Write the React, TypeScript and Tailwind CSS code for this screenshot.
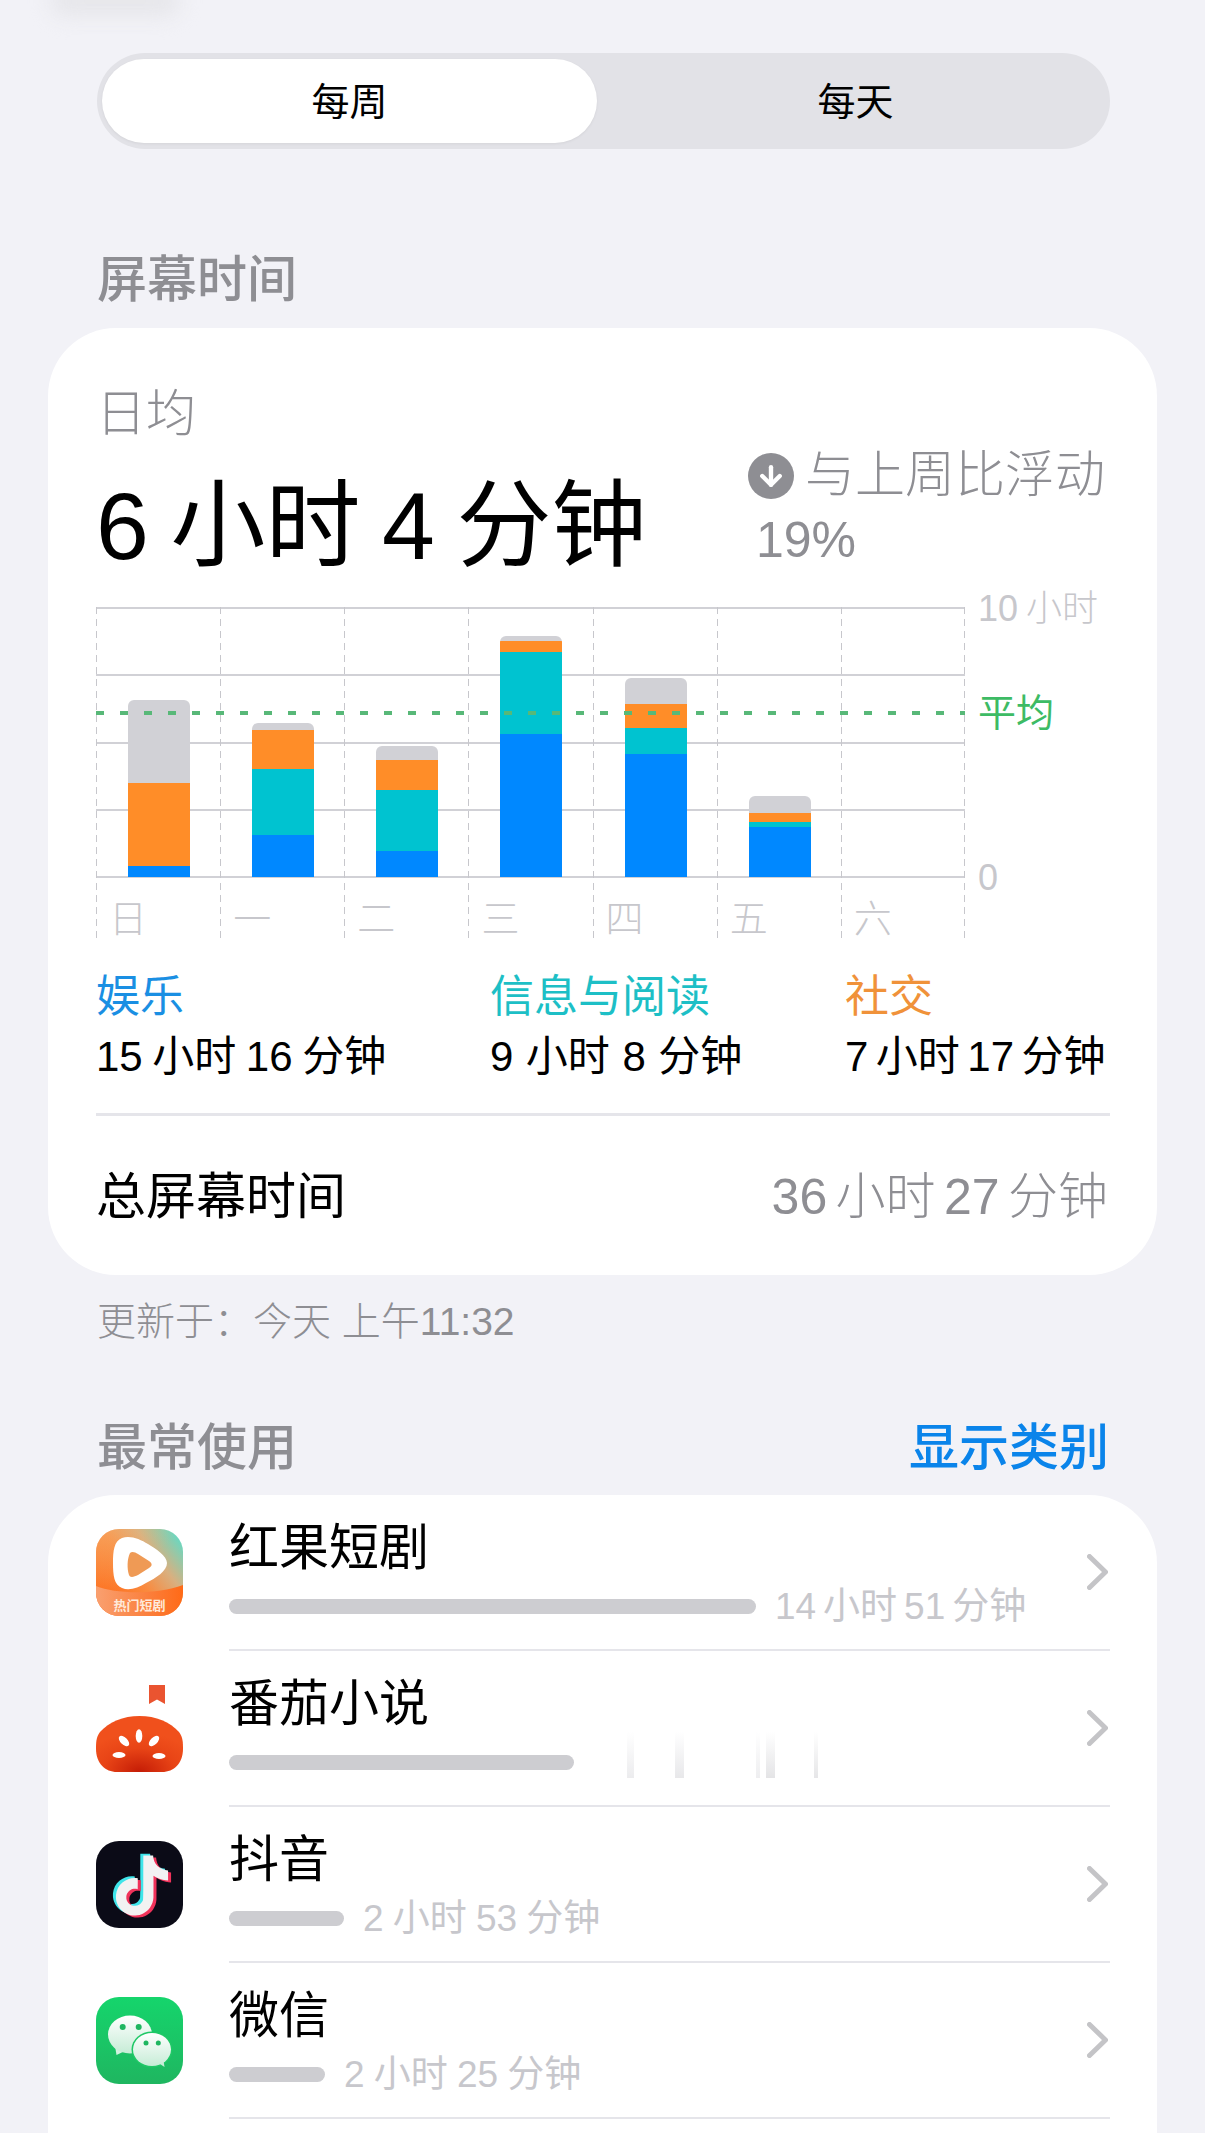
import { ArrowDown } from "lucide-react";

const dayBars = [
  { day: "日", gray: 83, orange: 83, teal: 0, blue: 11 },
  { day: "一", gray: 7, orange: 39, teal: 66, blue: 42 },
  { day: "二", gray: 14, orange: 30, teal: 61, blue: 26 },
  { day: "三", gray: 5, orange: 11, teal: 82, blue: 143 },
  { day: "四", gray: 26, orange: 24, teal: 26, blue: 123 },
  { day: "五", gray: 17, orange: 9, teal: 5, blue: 50 },
  { day: "六", gray: 0, orange: 0, teal: 0, blue: 0 },
];

function DashLine({ className = "" }: { className?: string }) {
  return (
    <div
      className={`absolute top-0 bottom-0 w-px bg-[repeating-linear-gradient(to_bottom,#c7c7cc_0_7px,transparent_7px_12px)] ${className}`}
    />
  );
}

function Chart() {
  return (
    <div className="flex">
      <div className="relative h-[335px] w-[869px]">
        {/* horizontal grid */}
        <div className="absolute inset-x-0 top-0 flex h-[271px] flex-col justify-between">
          {[0, 1, 2, 3, 4].map((i) => (
            <div key={i} className="h-[2px] bg-[#d1d1d6]" />
          ))}
        </div>
        <div className="relative grid h-full grid-cols-7">
          {dayBars.map((b) => (
            <div key={b.day} className="relative flex flex-col">
              <DashLine className="left-0" />
              <div className="flex h-[270px] items-end justify-center pl-[2px]">
                <div className="flex w-[62px] flex-col overflow-hidden rounded-t-[6px]">
                  <div className="bg-[#d1d1d6]" style={{ height: b.gray }} />
                  <div className="bg-[#ff8d28]" style={{ height: b.orange }} />
                  <div className="bg-[#00c3d0]" style={{ height: b.teal }} />
                  <div className="bg-[#0088ff]" style={{ height: b.blue }} />
                </div>
              </div>
              <div className="pt-[24px] pl-[13px] text-[38px] leading-[36px] font-light text-[#c7c7cc]">
                {b.day}
              </div>
            </div>
          ))}
        </div>
        <DashLine className="right-0" />
        {/* average line */}
        <div className="absolute inset-x-0 top-[104px] h-[4px] bg-[repeating-linear-gradient(to_right,#58b878_0_8px,transparent_8px_24px)]" />
      </div>
      <div className="-mt-[16px] ml-[13px] flex flex-col leading-[36px]">
        <div className="text-[36px] font-light text-[#c7c7cc] [word-spacing:-0.06em]">10 小时</div>
        <div className="mt-[68px] text-[38px] text-[#3dbb64]">平均</div>
        <div className="mt-[129px] text-[36px] font-light text-[#c7c7cc]">0</div>
      </div>
    </div>
  );
}

function Category({
  name,
  time,
  color,
  className,
  timeClass,
}: {
  name: string;
  time: string;
  color: string;
  className: string;
  timeClass: string;
}) {
  return (
    <div className={className}>
      <div className={`pt-[1px] text-[44px] leading-[44px] ${color}`}>{name}</div>
      <div className={`mt-[16px] text-[42px] leading-[44px] text-black ${timeClass}`}>{time}</div>
    </div>
  );
}

function HongguoIcon() {
  return (
    <svg viewBox="0 0 87 87" className="size-[87px]">
      <defs>
        <linearGradient id="hg" x1="0" y1="0.85" x2="1" y2="0.1">
          <stop offset="0" stopColor="#ff6410" />
          <stop offset="0.45" stopColor="#fa8a3e" />
          <stop offset="0.7" stopColor="#d8b080" />
          <stop offset="1" stopColor="#5edcc8" />
        </linearGradient>
        <linearGradient id="hg2" x1="0" y1="0" x2="0.5" y2="0.5">
          <stop offset="0" stopColor="#f5b877" stopOpacity="0.5" />
          <stop offset="1" stopColor="#f5b877" stopOpacity="0" />
        </linearGradient>
        <linearGradient id="hg3" x1="0" y1="0" x2="1" y2="0">
          <stop offset="0" stopColor="#f9a070" />
          <stop offset="0.6" stopColor="#fb7f3c" />
          <stop offset="1" stopColor="#ff6a17" />
        </linearGradient>
      </defs>
      <rect width="87" height="87" rx="23" fill="url(#hg)" />
      <rect width="87" height="87" rx="23" fill="url(#hg2)" />
      <path
        d="M26 9C34 6 44 10 52 15C60 20 71 27 71 34C71 42 60 49 50 54C42 59 33 62 26 59C18 56 17 46 17 34C17 22 18 12 26 9Z"
        fill="#fff"
      />
      <path
        d="M34 24C36 22 39 23 42 25L53 32C57 35 56 37 53 39L42 46C38 48 34 49 33 46C31 40 31 30 34 24Z"
        fill="#ef9a55"
      />
      <path d="M0 57C20 65 60 66 87 56V64A23 23 0 0 1 64 87H23A23 23 0 0 1 0 64Z" fill="url(#hg3)" />
      <text x="43.500" y="81" textAnchor="middle" fontSize="13" fontWeight="700" fill="#ffe9d9">
        热门短剧
      </text>
    </svg>
  );
}

function TomatoIcon() {
  return (
    <svg viewBox="0 0 87 87" className="size-[87px]">
      <defs>
        <radialGradient id="tm" cx="0.5" cy="1" r="0.7">
          <stop offset="0" stopColor="#c41c06" />
          <stop offset="0.6" stopColor="#e84416" />
          <stop offset="1" stopColor="#f0501c" />
        </radialGradient>
      </defs>
      <path d="M53 0H69V19L61 14.500L53 19Z" fill="#ea5430" />
      <path
        d="M43.500 31C60 31 74 37 83 47C87 52 87 58 87 64C87 78 78 87 66 87H21C9 87 0 78 0 64C0 58 0 52 4 47C13 37 27 31 43.500 31Z"
        fill="url(#tm)"
      />
      <g fill="#fff">
        <ellipse cx="43" cy="51" rx="3.300" ry="6.700" />
        <ellipse cx="28" cy="56" rx="3.500" ry="6.500" transform="rotate(-45 28 56)" />
        <ellipse cx="58" cy="56" rx="3.500" ry="6.500" transform="rotate(45 58 56)" />
        <ellipse cx="23" cy="70" rx="6.500" ry="3" />
        <ellipse cx="63" cy="71" rx="6.500" ry="3" />
      </g>
    </svg>
  );
}

const notePath =
  "M12.525.02c1.31-.02 2.61-.01 3.91-.02.08 1.53.63 3.09 1.75 4.17 1.12 1.11 2.7 1.62 4.24 1.79v4.03c-1.44-.05-2.89-.35-4.2-.97-.57-.26-1.1-.59-1.62-.93-.01 2.92.01 5.84-.02 8.75-.08 1.4-.54 2.79-1.35 3.94-1.31 1.92-3.58 3.17-5.91 3.21-1.43.08-2.86-.31-4.08-1.03-2.02-1.19-3.44-3.37-3.65-5.71-.02-.5-.03-1-.01-1.49.18-1.9 1.12-3.72 2.58-4.96 1.66-1.44 3.98-2.13 6.15-1.72.02 1.48-.04 2.96-.04 4.44-.99-.32-2.15-.23-3.02.37-.63.41-1.11 1.04-1.36 1.75-.21.51-.15 1.07-.14 1.61.24 1.64 1.82 3.02 3.5 2.87 1.12-.01 2.19-.66 2.77-1.61.19-.33.4-.67.41-1.06.1-1.79.06-3.57.07-5.36.01-4.03-.01-8.05.02-12.07z";

function DouyinIcon() {
  return (
    <svg viewBox="0 0 87 87" className="size-[87px]">
      <rect width="87" height="87" rx="23" fill="#0b0b17" />
      <g transform="translate(16 14.500) scale(2.500)">
        <path d={notePath} fill="#3fe5ea" transform="translate(-1.200 -0.700)" />
        <path d={notePath} fill="#f0325a" transform="translate(1.200 0.800)" />
        <path d={notePath} fill="#f2f2f2" />
      </g>
    </svg>
  );
}

function WechatIcon() {
  return (
    <svg viewBox="0 0 87 87" className="size-[87px]">
      <defs>
        <linearGradient id="wx" x1="0" y1="0" x2="0" y2="1">
          <stop offset="0" stopColor="#15d56c" />
          <stop offset="1" stopColor="#1fb660" />
        </linearGradient>
        <linearGradient id="wb" x1="0" y1="0" x2="0" y2="1">
          <stop offset="0" stopColor="#ffffff" />
          <stop offset="1" stopColor="#c6ecd6" />
        </linearGradient>
      </defs>
      <rect width="87" height="87" rx="23" fill="url(#wx)" />
      <path d="M19 49L20.500 58L31 53Z" fill="#d4f2e0" />
      <ellipse cx="34" cy="37.500" rx="22" ry="19" fill="url(#wb)" />
      <circle cx="26.700" cy="30" r="3" fill="#1fb660" />
      <circle cx="42.700" cy="30" r="3" fill="#1fb660" />
      <ellipse cx="56" cy="52.500" rx="20.500" ry="18" fill="#1fc866" />
      <path d="M61 65L68.500 70L67 60Z" fill="#c6ecd6" />
      <ellipse cx="56" cy="52.500" rx="19" ry="16.500" fill="url(#wb)" />
      <circle cx="50" cy="46" r="2.500" fill="#1fb660" />
      <circle cx="62.300" cy="46" r="2.500" fill="#1fb660" />
    </svg>
  );
}

function Smudge() {
  return (
    <div className="flex h-[46px] items-stretch">
      <div className="ml-[34px] w-[7px] bg-linear-to-b from-transparent to-[#ececee]" />
      <div className="ml-[41px] w-[9px] bg-linear-to-b from-transparent to-[#e8e8ea]" />
      <div className="ml-[72px] w-[4px] bg-linear-to-b from-transparent to-[#eeeef0]" />
      <div className="ml-[6px] w-[9px] bg-linear-to-b from-transparent to-[#e4e4e6]" />
      <div className="ml-[39px] w-[4px] bg-linear-to-b from-transparent to-[#e6e6e8]" />
    </div>
  );
}

function AppRow({
  icon,
  name,
  barClass,
  time,
  timeClass = "",
  smudge,
}: {
  icon: React.ReactNode;
  name: string;
  barClass: string;
  time?: string;
  timeClass?: string;
  smudge?: boolean;
}) {
  return (
    <div className="flex h-[156px] pl-[48px]">
      <div className="mt-[34px] size-[87px] shrink-0">{icon}</div>
      <div className="mr-[47px] ml-[46px] flex flex-1 items-center border-b-[2px] border-[#e5e5ea]">
        <div className="flex-1 self-start pt-[28px]">
          <div className="text-[50px] leading-[50px] text-black">{name}</div>
          <div className="mt-[26px] flex h-[15px] items-center gap-[19px]">
            <div className={`h-[15px] rounded-full bg-[#cdcdd1] ${barClass}`} />
            {time && <div className={`text-[37px] leading-[40px] text-[#c7c7cc] ${timeClass}`}>{time}</div>}
            {smudge && (
              <div className="-mt-[16px]">
                <Smudge />
              </div>
            )}
          </div>
        </div>
        <svg viewBox="0 0 21 36" className="mr-[2px] h-[36px] w-[21px]" fill="none">
          <path
            d="M2.500 2.500L18.500 18L2.500 33.500"
            stroke="#c4c4c7"
            strokeWidth="5"
            strokeLinecap="round"
            strokeLinejoin="round"
          />
        </svg>
      </div>
    </div>
  );
}

export default function App() {
  return (
    <div className="relative flex h-[2133px] w-[1205px] flex-col overflow-hidden bg-[#f2f2f7] [font-family:'Liberation_Sans','Noto_Sans_CJK_SC',sans-serif]">
      {/* faint smudge at the top edge */}
      <div className="absolute -top-[14px] left-[50px] h-[30px] w-[130px] rounded-full bg-[#e6e6ea] blur-[10px]" />

      {/* segmented control */}
      <div className="relative mt-[53px] mr-[95px] ml-[97px] flex h-[96px] rounded-full bg-[#e2e2e7] p-[6px] pl-[5px] text-[38px] text-black">
        <div className="flex w-[495px] items-center justify-center rounded-full bg-white pt-[2px] leading-[84px] shadow-[0_1px_3px_rgba(0,0,0,0.06)]">
          每周
        </div>
        <div className="flex flex-1 items-center justify-center pt-[2px] pl-[10px]">每天</div>
      </div>

      <div className="mt-[107px] ml-[97px] text-[50px] leading-[49px] font-medium text-[#8e8e93]">屏幕时间</div>

      {/* screen time card */}
      <div className="mx-[48px] mt-[23px] h-[947px] rounded-[68px] bg-white pt-[62px] pr-[47px] pl-[48px]">
        <div className="pt-[1px] text-[50px] leading-[46px] font-light text-[#8e8e93]">日均</div>
        <div className="flex h-[170px] justify-between">
          <div className="pt-[43px] text-[95px] leading-[92px] text-black [word-spacing:-0.05em]">6 小时 4 分钟</div>
          <div className="w-[362px] pt-[6px] text-[50px] leading-[65px] font-light text-[#8e8e93]">
            <div className="flex items-center gap-[11px]">
              <div className="flex size-[46px] items-center justify-center rounded-full bg-[#8e8e93]">
                <ArrowDown className="size-[30px] text-white" strokeWidth={3.5} />
              </div>
              与上周比浮动
            </div>
            <div className="pl-[8px]">19%</div>
          </div>
        </div>

        <Chart />

        <div className="mt-[32px] flex">
          <Category
            className="w-[394px]"
            name="娱乐"
            time="15 小时 16 分钟"
            color="text-[#1a8fe3]"
            timeClass="[word-spacing:-0.05em]"
          />
          <Category
            className="w-[355px]"
            name="信息与阅读"
            time="9 小时 8 分钟"
            color="text-[#1dbfc6]"
            timeClass="[word-spacing:0.02em]"
          />
          <Category
            className="flex-1"
            name="社交"
            time="7 小时 17 分钟"
            color="text-[#f0923a]"
            timeClass="[word-spacing:-0.1em]"
          />
        </div>
        <div className="mt-[34px] h-[3px] bg-[#e5e5ea]" />
        <div className="flex h-[159px] items-center justify-between pt-[2px] text-[50px] leading-[50px]">
          <div className="text-black">总屏幕时间</div>
          <div className="mr-[2px] font-light text-[#8e8e93] [word-spacing:-0.11em]">36 小时 27 分钟</div>
        </div>
      </div>

      <div className="mt-[28px] ml-[97px] text-[39px] leading-[38px] font-light text-[#8e8e93]">
        更新于：今天 上午11:32
      </div>

      <div className="mt-[83px] mr-[96px] mb-[22px] ml-[97px] flex justify-between text-[50px] leading-[49px] font-medium">
        <div className="text-[#8e8e93]">最常使用</div>
        <div className="text-[#0a84ea]">显示类别</div>
      </div>

      {/* most used apps */}
      <div className="mx-[48px] flex-1 rounded-t-[68px] bg-white">
        <AppRow
          icon={<HongguoIcon />}
          name="红果短剧"
          barClass="w-[527px]"
          time="14 小时 51 分钟"
          timeClass="[word-spacing:-0.09em]"
        />
        <AppRow icon={<TomatoIcon />} name="番茄小说" barClass="w-[345px]" smudge />
        <AppRow
          icon={<DouyinIcon />}
          name="抖音"
          barClass="w-[115px]"
          time="2 小时 53 分钟"
          timeClass="[word-spacing:-0.03em]"
        />
        <AppRow
          icon={<WechatIcon />}
          name="微信"
          barClass="w-[96px]"
          time="2 小时 25 分钟"
          timeClass="[word-spacing:-0.03em]"
        />
      </div>
    </div>
  );
}
